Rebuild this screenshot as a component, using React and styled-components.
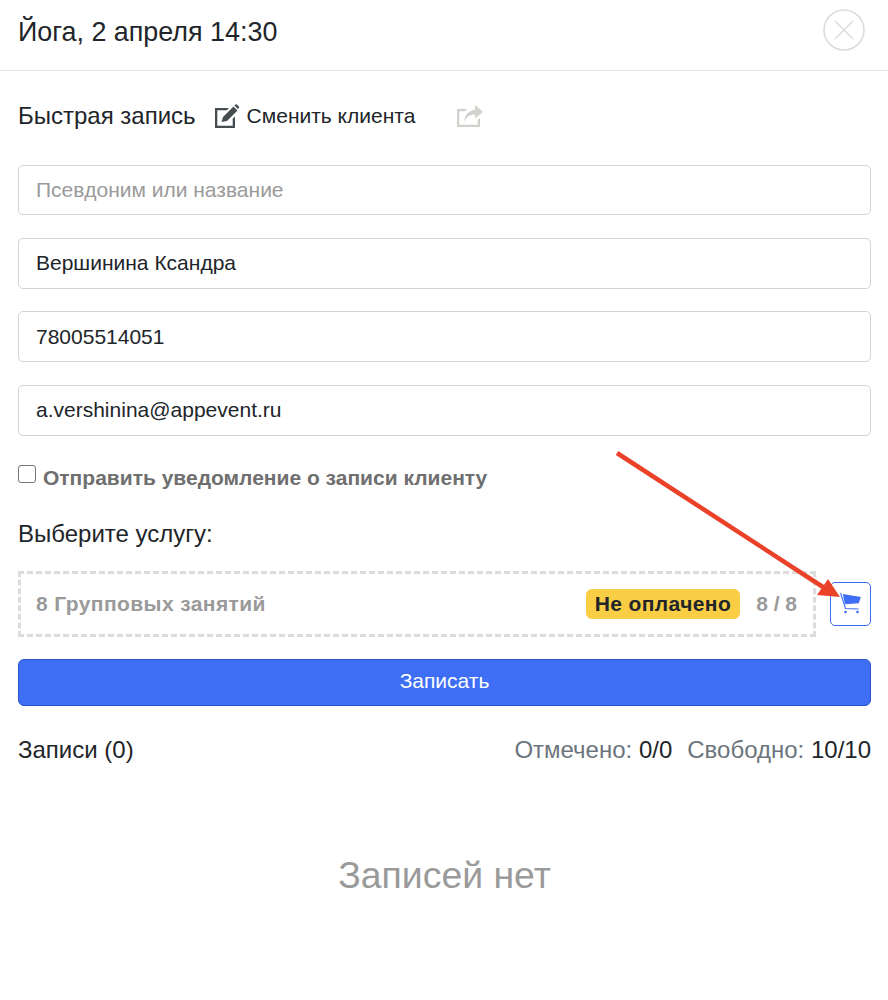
import React from 'react';
import styled, { createGlobalStyle } from 'styled-components';

const GlobalStyle = createGlobalStyle`
  html, body {
    margin: 0;
    background: #fff;
    font-family: "Liberation Sans", Arial, sans-serif;
    color: #212529;
  }
  * {
    box-sizing: border-box;
  }
`;

const Modal = styled.div`
  position: relative;
  width: 888px;
  height: 1000px;
  overflow: hidden;
  background: #fff;
`;

const Header = styled.header`
  display: flex;
  align-items: center;
  justify-content: space-between;
  height: 71px;
  padding: 0 23px 10px 18px;
  border-bottom: 1px solid #e3e3e3;
`;

const Title = styled.h1`
  margin: 0;
  padding-top: 4px;
  font-size: 26.9px;
  font-weight: 400;
  line-height: 28px;
`;

const CloseButton = styled.button`
  display: flex;
  padding: 0;
  border: none;
  background: none;
`;

const Body = styled.div`
  padding: 30px 17px 0 18px;
`;

const QuickRow = styled.div`
  display: flex;
  align-items: center;
  height: 30px;
  margin-bottom: 33.6px;
`;

const QuickTitle = styled.span`
  font-size: 24px;
  line-height: 30px;
`;

const ChangeClient = styled.span`
  display: flex;
  align-items: center;
  gap: 7px;
  margin-left: 19px;
  font-size: 21px;
  line-height: 30px;
`;

const ShareIcon = styled.svg`
  margin-left: 42px;
`;

const Fields = styled.div`
  display: flex;
  flex-direction: column;
  gap: 22.6px;
`;

const Input = styled.input`
  display: block;
  width: 100%;
  height: 50.8px;
  padding: 0 17px;
  border: 1px solid #ced4da;
  border-radius: 5px;
  background: #fff;
  color: #212529;
  font-family: inherit;
  font-size: 21px;
  outline: none;
  &::placeholder {
    color: #9a9a9a;
    opacity: 1;
  }
`;

const NotifyRow = styled.label`
  display: flex;
  align-items: flex-start;
  gap: 7px;
  margin-top: 27.4px;
  color: #6f6f6f;
  font-size: 21px;
  font-weight: 700;
  line-height: 30px;
`;

const Checkbox = styled.span`
  flex: none;
  width: 18px;
  height: 18px;
  margin-top: 2px;
  border: 1px solid #767676;
  border-radius: 3px;
  background: #fff;
`;

const SectionLabel = styled.div`
  margin-top: 26px;
  font-size: 24px;
  line-height: 30px;
`;

const ServiceRow = styled.div`
  display: flex;
  align-items: center;
  gap: 14px;
  margin-top: 22px;
`;

const ServiceBox = styled.div`
  flex: 1;
  display: flex;
  align-items: center;
  height: 66px;
  padding: 0 16px 0 15px;
  border: 3px dashed #dcdcdc;
  color: #9a9a9a;
  font-size: 21px;
  font-weight: 700;
`;

const ServiceName = styled.span`
  flex: 1;
  letter-spacing: 0.4px;
`;

const Badge = styled.span`
  padding: 0 9px;
  border-radius: 6px;
  background: #f9ce45;
  color: #212529;
  line-height: 30px;
  letter-spacing: 0.4px;
`;

const Count = styled.span`
  margin-left: 16px;
`;

const CartButton = styled.button`
  flex: none;
  display: flex;
  align-items: center;
  justify-content: center;
  width: 41px;
  height: 44px;
  padding: 0;
  border: 1px solid #3d6ef5;
  border-radius: 5px;
  background: #fff;
`;

const SubmitButton = styled.button`
  display: block;
  width: 100%;
  height: 47px;
  margin-top: 22px;
  padding: 0 0 2px;
  border: 1px solid #2a55c9;
  border-radius: 6px;
  background: #3d6ef5;
  color: #fff;
  font-family: inherit;
  font-size: 21px;
`;

const StatsRow = styled.div`
  display: flex;
  justify-content: space-between;
  margin-top: 29px;
  font-size: 24px;
  line-height: 30px;
`;

const Stats = styled.div`
  display: flex;
  gap: 15px;
`;

const Muted = styled.span`
  color: #6c757d;
`;

const EmptyText = styled.div`
  margin-top: 88px;
  color: #9a9a9a;
  font-size: 37.4px;
  line-height: 44px;
  text-align: center;
`;

const Arrow = styled.svg`
  position: absolute;
  left: 0;
  top: 0;
  pointer-events: none;
`;

export default function App() {
  return (
    <Modal>
      <GlobalStyle />
      <Header>
        <Title>Йога, 2 апреля 14:30</Title>
        <CloseButton>
          <svg width="42" height="42" viewBox="0 0 42 42" fill="none" stroke="#dcdcdc">
            <circle cx="21" cy="21" r="20" strokeWidth="1.6" />
            <path d="M12 12 L30 30 M30 12 L12 30" strokeWidth="1.5" />
          </svg>
        </CloseButton>
      </Header>
      <Body>
        <QuickRow>
          <QuickTitle>Быстрая запись</QuickTitle>
          <ChangeClient>
            <svg width="25" height="25" viewBox="0 0 25 25" fill="#454d50">
              <path d="M0 4h14l-2.300 2.300H2.300v15.400h15.400v-7l2.300-2.300V24H0z" />
              <path d="M6.500 18l1.500-5L18.500 2.500l4 4L12 17z" />
              <path d="M19.500 1.500l1-1c.4-.4 1-.4 1.400 0l2 2c.4.4.4 1 0 1.400l-1 1z" />
            </svg>
            Сменить клиента
          </ChangeClient>
          <ShareIcon width="28" height="24" viewBox="0 0 28 24" fill="#d2d1cd">
            <path d="M0 5h10l-2 2.300H2.300v13.400h18.400v-5l2.300-2V23H0z" />
            <path d="M18 1l8 7-8 6.500V10.500c-5 0-8.500 2-11 7.500 .5-7 4.500-11.500 11-12z" />
          </ShareIcon>
        </QuickRow>
        <Fields>
          <Input placeholder="Псевдоним или название" />
          <Input defaultValue="Вершинина Ксандра" />
          <Input defaultValue="78005514051" />
          <Input defaultValue="a.vershinina@appevent.ru" />
        </Fields>
        <NotifyRow>
          <Checkbox />
          Отправить уведомление о записи клиенту
        </NotifyRow>
        <SectionLabel>Выберите услугу:</SectionLabel>
        <ServiceRow>
          <ServiceBox>
            <ServiceName>8 Групповых занятий</ServiceName>
            <Badge>Не оплачено</Badge>
            <Count>8 / 8</Count>
          </ServiceBox>
          <CartButton>
            <svg width="22" height="22" viewBox="0 0 22 22">
              <path d="M0.500 0l5 15.500 13 .5" fill="none" stroke="#3d6ef5" strokeWidth="1.100" />
              <path d="M2.800 1l18 3-2 6.300-14 1z" fill="#3d6ef5" />
              <circle cx="5.500" cy="19" r="1.300" fill="#3d6ef5" />
              <circle cx="17.500" cy="19" r="1.300" fill="#3d6ef5" />
            </svg>
          </CartButton>
        </ServiceRow>
        <SubmitButton>Записать</SubmitButton>
        <StatsRow>
          <span>Записи (0)</span>
          <Stats>
            <span><Muted>Отмечено:</Muted> 0/0</span>
            <span><Muted>Свободно:</Muted> 10/10</span>
          </Stats>
        </StatsRow>
        <EmptyText>Записей нет</EmptyText>
      </Body>
      <Arrow width="888" height="1000" viewBox="0 0 888 1000">
        <path d="M617 453 L826 589" stroke="#ea4128" strokeWidth="4.500" fill="none" />
        <path d="M840 597 L817 595 L828 579 z" fill="#ea4128" />
      </Arrow>
    </Modal>
  );
}
